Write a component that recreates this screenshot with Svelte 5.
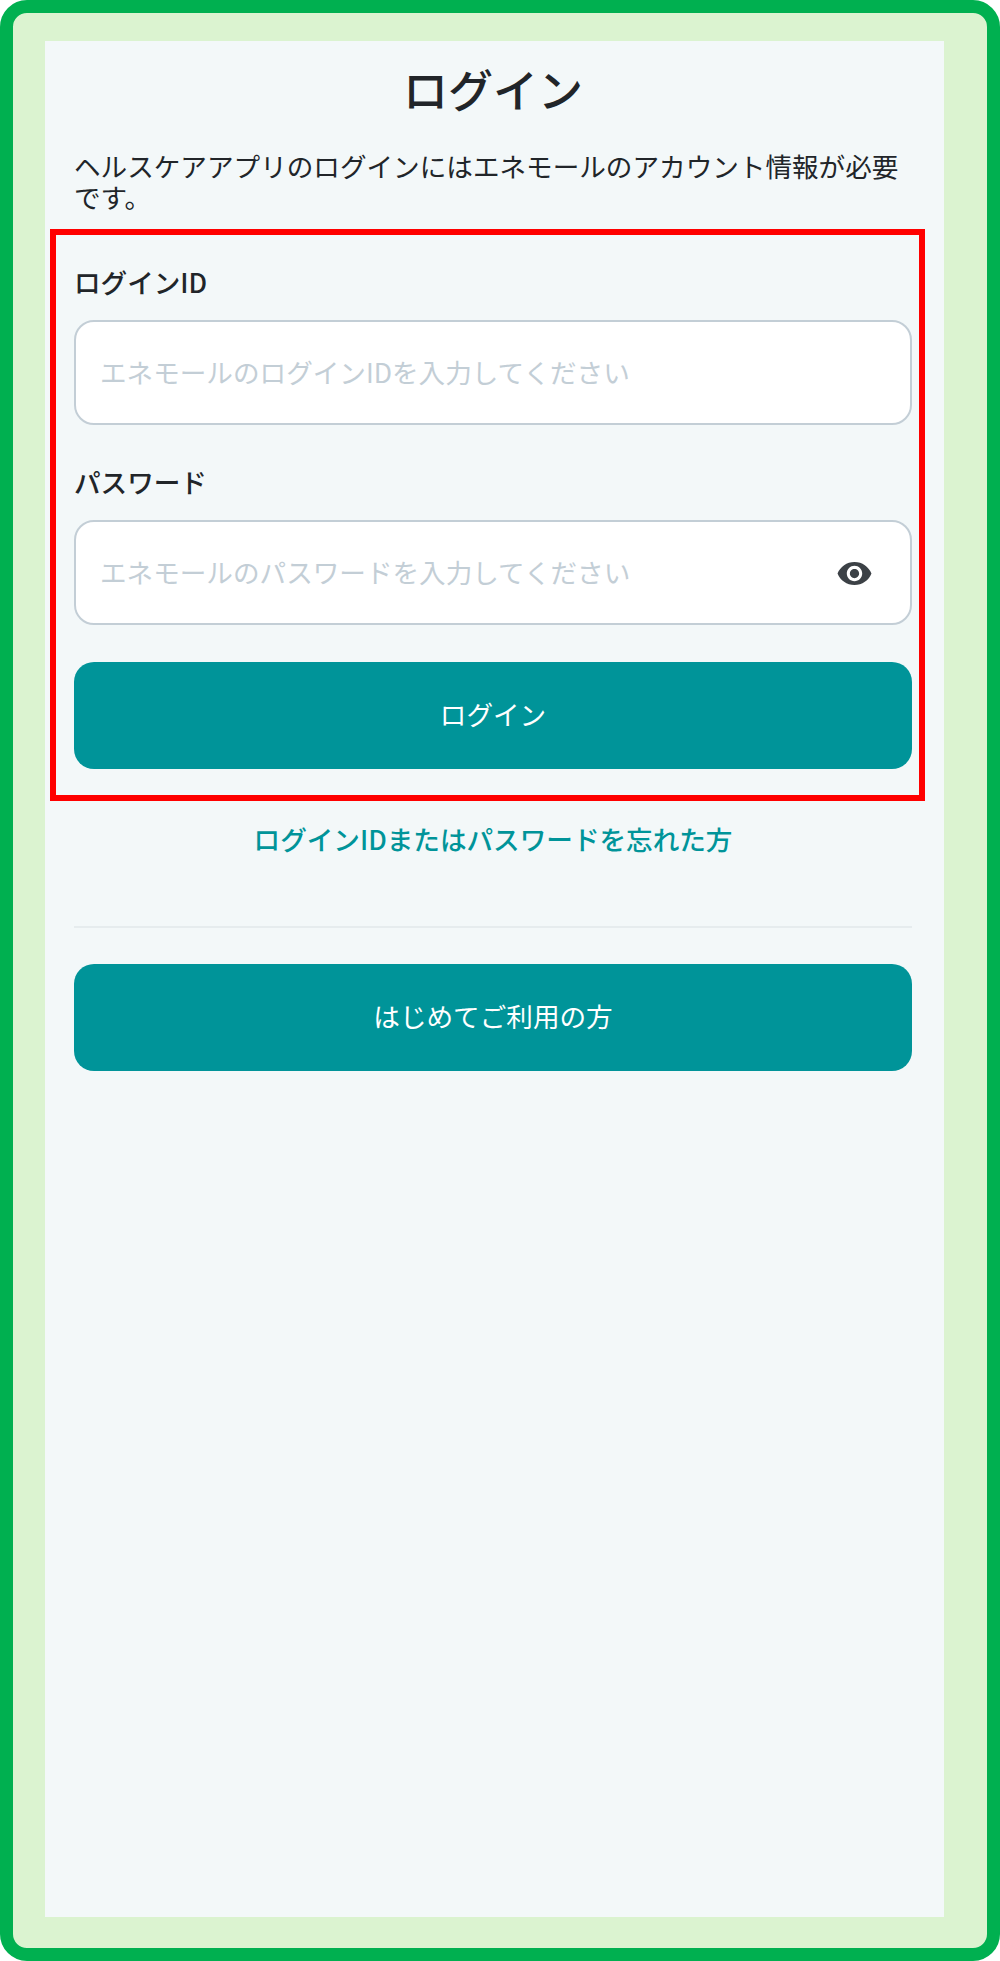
<script>
  let loginId = $state('');
  let password = $state('');
</script>

<div class="frame">
  <main class="panel">
    <h1>ログイン</h1>
    <p class="intro">ヘルスケアアプリのログインにはエネモールのアカウント情報が必要です。</p>

    <form class="highlight" onsubmit={(e) => e.preventDefault()}>
      <label class="field">
        <span class="label">ログインID</span>
        <input type="text" placeholder="エネモールのログインIDを入力してください" bind:value={loginId} />
      </label>
      <label class="field second">
        <span class="label">パスワード</span>
        <span class="input-wrap">
          <input type="password" placeholder="エネモールのパスワードを入力してください" bind:value={password} />
          <svg class="eye" viewBox="0 0 24 24" aria-hidden="true">
            <path d="M12 4.5C7 4.5 2.73 7.61 1 12c1.73 4.39 6 7.5 11 7.5s9.27-3.11 11-7.5c-1.73-4.39-6-7.5-11-7.5zM12 17c-2.76 0-5-2.24-5-5s2.24-5 5-5 5 2.24 5 5-2.24 5-5 5zm0-8c-1.66 0-3 1.34-3 3s1.34 3 3 3 3-1.34 3-3-1.34-3-3-3z" />
          </svg>
        </span>
      </label>
      <button class="primary" type="submit">ログイン</button>
    </form>

    <a class="forgot" href="#forgot">ログインIDまたはパスワードを忘れた方</a>
    <hr />
    <button class="primary" type="button">はじめてご利用の方</button>
  </main>
</div>

<style>
  :global(body) {
    margin: 0;
  }
  .frame {
    box-sizing: border-box;
    width: 1000px;
    height: 1961px;
    padding: 28px 43px 31px 32px;
    border: 13px solid #00b050;
    border-radius: 27px;
    background: #dbf3d0;
    font-family: "Noto Sans CJK JP", "Noto Sans", sans-serif;
    color: #212529;
  }
  .panel {
    box-sizing: border-box;
    height: 100%;
    padding: 14px 32px 0 29px;
    background: #f3f8f9;
    display: flex;
    flex-direction: column;
  }
  h1 {
    margin: 0;
    text-align: center;
    font-size: 45px;
    line-height: 68px;
    font-weight: 500;
  }
  .intro {
    margin: 27px 0 0;
    font-size: 26.6px;
    line-height: 31px;
    font-weight: 400;
  }
  .highlight {
    margin: 17px -13px 0 -24px;
    padding: 28px 7px 26px 18px;
    border: 6px solid #f00;
    display: flex;
    flex-direction: column;
  }
  .field {
    display: flex;
    flex-direction: column;
  }
  .second {
    margin-top: 38px;
  }
  .label {
    font-size: 26.6px;
    line-height: 38px;
    font-weight: 500;
    margin-bottom: 19px;
  }
  .input-wrap {
    position: relative;
    display: block;
  }
  input {
    box-sizing: border-box;
    display: block;
    width: 100%;
    height: 105px;
    padding: 0 24px 2px;
    border: 2px solid #c3ced6;
    border-radius: 20px;
    background: #fff;
    font: inherit;
    font-size: 26.6px;
    outline: none;
  }
  input::placeholder {
    color: #c3ced6;
    opacity: 1;
  }
  .eye {
    position: absolute;
    right: 39px;
    top: 35px;
    width: 37px;
    height: 37px;
    fill: #3c4146;
  }
  .primary {
    display: block;
    width: 100%;
    height: 107px;
    padding: 0 0 4px;
    border: 0;
    border-radius: 20px;
    background: #009499;
    color: #fff;
    font: inherit;
    font-size: 26.6px;
  }
  .highlight .primary {
    margin-top: 37px;
  }
  .forgot {
    margin-top: 18px;
    text-align: center;
    font-size: 26.6px;
    line-height: 40px;
    font-weight: 500;
    color: #009499;
    text-decoration: none;
  }
  hr {
    width: 100%;
    height: 2px;
    margin: 67px 0 36px;
    border: 0;
    background: #e6ecee;
  }
</style>
